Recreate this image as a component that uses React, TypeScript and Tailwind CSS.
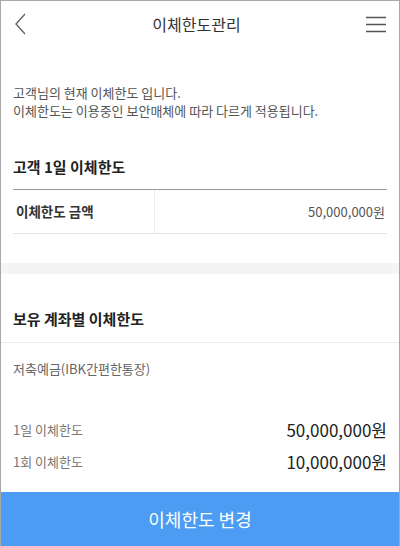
const FONT = { fontFamily: '"Noto Sans CJK KR", "Noto Sans", sans-serif' };

function Header() {
  return (
    <div className="relative flex h-[45px] shrink-0 items-center justify-between px-[12px]">
      <svg width="14" height="22" viewBox="0 0 14 22" className="ml-[1px]">
        <path d="M11 1 L2 11 L11 21" fill="none" stroke="#666" strokeWidth="1.4" />
      </svg>
      <h1 className="text-[16px] leading-[20px] text-[#333]">이체한도관리</h1>
      <svg width="22" height="18" viewBox="0 0 22 18">
        <path d="M1 2.5 H21 M1 9.5 H21 M1 16.5 H21" stroke="#555" strokeWidth="1.4" />
      </svg>
    </div>
  );
}

export default function App() {
  return (
    <div
      className="flex h-[546px] w-[400px] flex-col overflow-hidden border-x border-t border-[#a8a8a8] bg-white"
      style={FONT}
    >
      <Header />

      {/* 안내 문구 */}
      <div className="mt-[38px] px-[12px] text-[13px] leading-[18px] text-[#555]">
        <p>고객님의 현재 이체한도 입니다.</p>
        <p>이체한도는 이용중인 보안매체에 따라 다르게 적용됩니다.</p>
      </div>

      {/* 고객 1일 이체한도 */}
      <section className="mt-[37px] px-[12px]">
        <h2 className="text-[15px] font-semibold leading-[20px] text-[#222]">고객 1일 이체한도</h2>
        <div className="mt-[12px] flex h-[45px] border-t border-b border-t-[#9a9a9a] border-b-[#e2e2e2]">
          <div className="flex w-[142px] items-center border-r border-[#ececec] px-[3px] text-[13.5px] font-semibold text-[#333]">
            이체한도 금액
          </div>
          <div className="flex flex-1 items-center justify-end pr-[2px] text-[13px] text-[#555]">
            50,000,000원
          </div>
        </div>
      </section>

      <div className="mt-[29px] h-[11px] shrink-0 bg-[#f4f4f4]" />

      {/* 보유 계좌별 이체한도 */}
      <section className="flex flex-1 flex-col">
        <h2 className="px-[12px] pt-[35px] pb-[13px] text-[15px] font-semibold leading-[20px] text-[#222]">
          보유 계좌별 이체한도
        </h2>
        <div className="border-t border-[#ececec] px-[12px] pt-[17px]">
          <p className="text-[13px] leading-[18px] text-[#666]">저축예금(IBK간편한통장)</p>
          <div className="mt-[40px] flex flex-col gap-[8px]">
            <div className="flex h-[24px] items-center justify-between">
              <span className="text-[13px] text-[#777]">1일 이체한도</span>
              <span className="text-[17px] text-[#222]">50,000,000원</span>
            </div>
            <div className="flex h-[24px] items-center justify-between">
              <span className="text-[13px] text-[#777]">1회 이체한도</span>
              <span className="text-[17px] text-[#222]">10,000,000원</span>
            </div>
          </div>
        </div>
      </section>

      <button
        type="button"
        className="flex h-[54px] shrink-0 items-center justify-center bg-[#4b9cf2] text-[18px] text-white"
      >
        이체한도 변경
      </button>
    </div>
  );
}
